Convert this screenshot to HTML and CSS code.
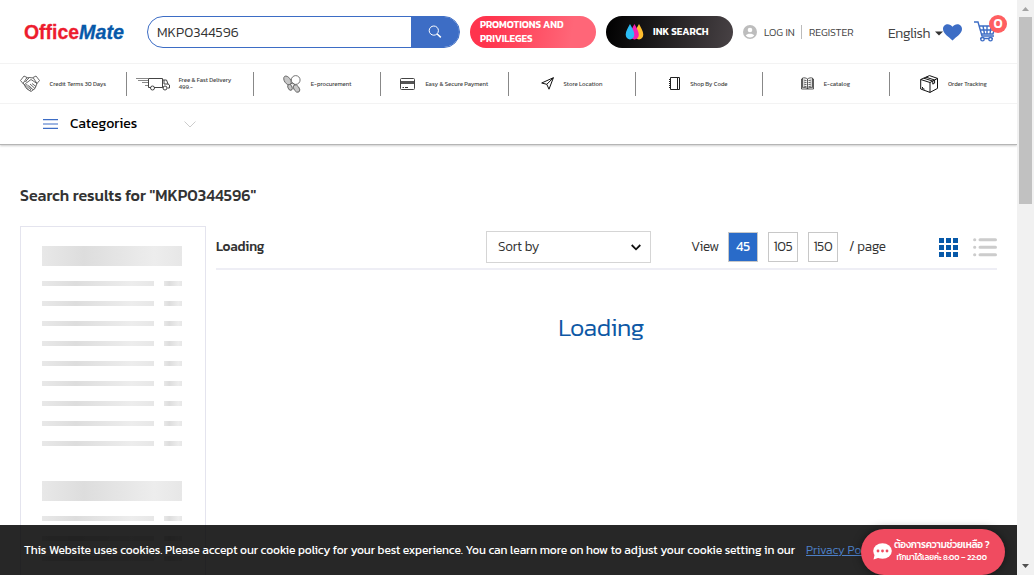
FILE: index.html
```html
<!DOCTYPE html>
<html lang="en">
<head>
<meta charset="utf-8">
<title>OfficeMate - Search results</title>
<link rel="stylesheet" href="styles.css">
</head>
<body>
<div class="page">
  <header class="header">
    <div class="topbar">
      <svg class="logo" width="102" height="22" viewBox="0 0 102 22" aria-label="OfficeMate">
        <text class="logo-office" x="0" y="17.500" textLength="55" lengthAdjust="spacingAndGlyphs">Office</text>
        <text class="logo-mate" x="55" y="17.500" textLength="45" lengthAdjust="spacingAndGlyphs">Mate</text>
      </svg>
      <div class="search">
        <div class="search-input">MKP0344596</div>
        <div class="search-btn"><svg width="14" height="14" viewBox="0 0 14 14" fill="none" stroke="#fff"><circle cx="5.8" cy="5.6" r="4.6"/><path d="M9.2 9l3.6 3.4" stroke-width="1.5"/></svg></div>
      </div>
      <div class="pill promo">PROMOTIONS AND<br>PRIVILEGES</div>
      <div class="pill ink">
        <svg width="20" height="18" viewBox="0 0 20 18"><path d="M14 1c2 4 4.300 7 4.300 10.500a4.300 5 0 0 1-8.600 0C9.700 8 12 5 14 1z" fill="#ffbd2e"/><path d="M9.500 1c2 4 4.300 7 4.300 10.500a4.300 5 0 0 1-8.600 0C5.200 8 7.500 5 9.500 1z" fill="#f51fb0"/><path d="M5 1c2 4 4.300 7 4.300 10.500a4.300 5 0 0 1-8.600 0C.7 8 3 5 5 1z" fill="#2bbcf5"/></svg>
        <span>INK SEARCH</span>
      </div>
      <div class="account">
        <svg width="14" height="14" viewBox="0 0 14 14"><circle cx="7" cy="7" r="7" fill="#bdbdbd"/><circle cx="7" cy="5" r="2.300" fill="#fff"/><path d="M2.800 10.500c1-2.500 7.400-2.500 8.400 0-2 2.600-6.400 2.600-8.400 0z" fill="#fff"/></svg>
        <span class="login">LOG IN</span><span class="register">REGISTER</span>
      </div>
      <div class="lang">English</div>
      <svg class="caret" width="8" height="5" viewBox="0 0 8 5"><path d="M0 .5h8L4 4.500z" fill="#333"/></svg>
      <svg class="heart" width="19" height="17" viewBox="0 0 19 17"><path d="M9.500 16.500C6 13 0 9.500 0 5 0-.2 6.500-1.500 9.500 2.800 12.500-1.500 19-.2 19 5c0 4.500-6 8-9.500 11.500z" fill="#3d6dc5"/></svg>
      <div class="cart">
        <svg width="22" height="21" viewBox="0 0 22 21" fill="none" stroke="#3d6dc5" stroke-width="1.400"><path d="M0 1h4l4 14h12M5 5h16l-2 8H7.500M6 9h14M9 5l1.500 8M13 5v8M17 5l-1 8M6 17.500h13"/><circle cx="8.500" cy="18.200" r="1.700" fill="#fff"/><circle cx="16.500" cy="18.200" r="1.700" fill="#fff"/></svg>
        <span class="badge">0</span>
      </div>
    </div>
    <nav class="services">
      <div class="service"><svg width="20" height="18" viewBox="0 0 20 18" fill="none" stroke="#444" stroke-width=".8"><path d="M.5 5.500L4 1l3 1.500-4 6zM19.500 5.500L16 1l-3 1.500 4 6zM6.500 3l3-.5 3.500.5M3 8l4 6 4 2.500 4-3 2-5-6-4-4 3-1.500-1L9.500 2.500M4 10l2-1.500 1 1-2.200 2M6 12.500l2-2 1 1-2 2.200M8.500 14.500l1.500-2 1 1-1 2.300M10 9l5 4.500M8.800 10.500l4.500 4.500M12 8.500l4 3"/></svg><span class="w57">Credit Terms 30 Days</span></div>
      <div class="service delivery"><svg width="34" height="14" viewBox="0 0 34 14" fill="none" stroke="#444"><path d="M0 1.500h12M2 3.500h10M6 5.500h6M9 8.500h3" stroke="#888" stroke-width="1.200"/><path d="M12.500 1.500h14v9H18m-3 0h-2.500v-9M26.500 3h4l1.500 4 1.500 1v3h-2M28 3v4h4M26.500 10.500h1"/><circle cx="16.500" cy="11" r="2"/><circle cx="29" cy="11" r="2"/></svg><span class="w57">Free &amp; Fast Delivery<br>499.-</span></div>
      <div class="service"><svg width="18" height="18" viewBox="0 0 18 18" fill="#c7c7c7" stroke="#666" stroke-width=".9"><ellipse cx="4.500" cy="5.500" rx="3" ry="5" transform="rotate(-35 4.500 5.500)"/><circle cx="12.700" cy="5" r="4.400" fill="#fff"/><ellipse cx="7" cy="12.300" rx="2" ry="3" transform="rotate(-25 7 12.300)"/><ellipse cx="13.500" cy="13.500" rx="2.600" ry="4.200" transform="rotate(-35 13.500 13.500)"/><path d="M7 9l3-1 2 2"/></svg><span class="w41">E-procurement</span></div>
      <div class="service"><svg width="15" height="12" viewBox="0 0 15 12"><rect x=".5" y=".5" width="14" height="11" rx="1" fill="#fff" stroke="#444"/><path d="M1 3h13v3H1z" fill="#555"/><path d="M2.500 9.500h1.500m1 0h3" stroke="#333"/></svg><span class="w63">Easy &amp; Secure Payment</span></div>
      <div class="service"><svg width="13" height="13" viewBox="0 0 13 13" fill="none" stroke="#111"><path d="M.7 6L12.400.7 8 12.200 5.800 7.300zM5.800 7.300L12.400.7"/></svg><span class="w39">Store Location</span></div>
      <div class="service"><svg width="11" height="13" viewBox="0 0 11 13" fill="none" stroke="#222"><path d="M1.500.5h9v12h-9zM8.500.5v12"/><path d="M0 2.500h2M0 4.500h2M0 6.500h2M0 8.500h2M0 10.500h2"/></svg><span class="w38">Shop By Code</span></div>
      <div class="service"><svg width="13" height="13" viewBox="0 0 13 13" fill="none" stroke="#333" stroke-width=".8"><path d="M6.500 2C5 .7 3 .7 1.500 1v9.500c2-.3 3.500 0 5 1 1.500-1 3-1.300 5-1V1c-1.500-.3-3.500-.3-5 1zm0 0v10M1.500 2H.5v10h12V2h-1M2.500 3l3 .6M2.500 5l3 .6M2.500 7l3 .6M2.500 9l3 .6M10.500 3l-3 .6M10.500 5l-3 .6M10.500 7l-3 .6M10.500 9l-3 .6"/></svg><span class="w27">E-catalog</span></div>
      <div class="service"><svg width="18" height="18" viewBox="0 0 18 18" fill="none" stroke="#111" stroke-width="1"><path d="M.7 4.500L9.500.6l8 2.800v10L10 17.400.7 14zM.7 4.500L10 7.500l7.500-4.100M10 7.500v10M3.800 3.200l9 2.900v3l1.800-1V5L6 2.200M2.500 12v1.500l2 .7"/></svg><span class="w39">Order Tracking</span></div>
    </nav>
    <div class="categories">
      <svg width="15" height="10" viewBox="0 0 15 10"><path d="M0 .7h15M0 5h15M0 9.300h15" stroke="#3d6dc5" stroke-width="1.200"/></svg>
      <span class="cat-label">Categories</span>
      <svg width="12" height="7" viewBox="0 0 12 7" fill="none" stroke="#ccc"><path d="M.5.5L6 6 11.500.5"/></svg>
    </div>
  </header>
  <main class="main">
    <h1 class="title">Search results for "MKP0344596"</h1>
    <div class="content">
      <aside class="filters">
        <div class="group"><div class="block"></div>
          <div class="line"><i></i><b></b></div><div class="line"><i></i><b></b></div><div class="line"><i></i><b></b></div>
          <div class="line"><i></i><b></b></div><div class="line"><i></i><b></b></div><div class="line"><i></i><b></b></div>
          <div class="line"><i></i><b></b></div><div class="line"><i></i><b></b></div><div class="line"><i></i><b></b></div>
        </div>
        <div class="group"><div class="block"></div>
          <div class="line"><i></i><b></b></div><div class="line"><i></i><b></b></div><div class="line"><i></i><b></b></div>
        </div>
      </aside>
      <section class="results">
        <div class="toolbar">
          <strong class="status">Loading</strong>
          <div class="sort"><span>Sort by</span><svg width="10" height="7" viewBox="0 0 10 7" fill="none" stroke="#111" stroke-width="1.800"><path d="M.7 1L5 5.300 9.300 1"/></svg></div>
          <span class="view">View</span>
          <div class="sizes"><span class="size active">45</span><span class="size">105</span><span class="size">150</span></div>
          <span class="per-page">/ page</span>
          <svg class="grid-icon" width="19" height="19" viewBox="0 0 19 19" fill="#0759a9"><path d="M0 0h5v5H0zM7 0h5v5H7zM14 0h5v5h-5zM0 7h5v5H0zM7 7h5v5H7zM14 7h5v5h-5zM0 14h5v5H0zM7 14h5v5H7zM14 14h5v5h-5z"/></svg>
          <svg width="24" height="19" viewBox="0 0 24 19" stroke="#ccc" stroke-width="3" stroke-linecap="round"><path d="M1.600 1.800h.2M7 1.800h15.500M1.600 9.300h.2M7 9.300h15.500M1.600 16.800h.2M7 16.800h15.500"/></svg>
        </div>
        <div class="loading">Loading</div>
      </section>
    </div>
  </main>
  <div class="cookie"><span>This Website uses cookies. Please accept our cookie policy for your best experience. You can learn more on how to adjust your cookie setting in our</span><a>Privacy Policy</a></div>
  <div class="chat">
    <svg width="19" height="17" viewBox="0 0 19 17"><ellipse cx="9.500" cy="8" rx="9.300" ry="7.800" fill="#fff"/><path d="M2 10L.5 16.500 8 14z" fill="#fff"/><g fill="#f04b60"><circle cx="5" cy="8" r="1.400"/><circle cx="9.500" cy="8" r="1.400"/><circle cx="14" cy="8" r="1.400"/></g></svg>
    <div class="chat-text"><div class="chat-q">ต้องการความช่วยเหลือ ?</div><div class="chat-h">ทักมาได้เลยค่ะ 8:00 – 22:00</div></div>
  </div>
</div>
<div class="scrollbar">
  <svg width="17" height="17"><path d="M5 11h7L8.500 7z" fill="#a3a3a3"/></svg>
  <div class="thumb"></div>
  <svg width="17" height="17"><path d="M5 6h7L8.500 10z" fill="#505050"/></svg>
</div>
</body>
</html>
```
FILE: styles.css
```css
* { box-sizing: border-box; }
body { margin: 0; width: 1034px; height: 575px; overflow: hidden; display: flex; background: #fff; color: #333; font-family: Kanit, Roboto, "Noto Sans", sans-serif; font-weight: 300; }
svg { display: block; flex: none; }
.page { position: relative; width: 1017px; height: 575px; overflow: hidden; }
.header { height: 145px; border-bottom: 1px solid #b5b5b5; box-shadow: 0 1px 2px rgba(0,0,0,.2); }
.topbar { height: 64px; border-bottom: 1px solid #f3f3f3; display: flex; align-items: center; padding-left: 24px; white-space: nowrap; }
.logo { margin-right: 21px; }
.logo-office, .logo-mate { font: bold 20px "Liberation Sans", sans-serif; fill: #ed1c2e; stroke: #ed1c2e; stroke-width: .3; }
.logo-mate { font-style: italic; fill: #0759a9; stroke: #0759a9; }
.search { width: 313px; height: 32px; display: flex; border-radius: 16px; overflow: hidden; border: 1px solid #3d6dc5; }
.search-input { flex: 1; padding-left: 9px; line-height: 31px; font-size: 14px; }
.search-btn { width: 48px; background: #3d6dc5; display: flex; align-items: center; justify-content: center; }
.pill { height: 32px; border-radius: 16px; color: #fff; font-weight: 600; }
.promo { width: 126px; margin-left: 10px; padding: 2px 0 0 10px; background: linear-gradient(100deg, #ff344d 15%, #ff6678 80%); font-size: 10px; line-height: 14px; letter-spacing: -.05px; }
.ink { width: 127px; margin-left: 10px; padding-left: 19px; display: flex; align-items: center; gap: 8px; background: linear-gradient(100deg, #000, #484245); font-size: 10px; }
.account { margin-left: 10px; width: 120px; display: flex; align-items: center; font-size: 10.500px; color: #444; }
.login { width: 38px; margin-left: 7px; border-right: 1px solid #bbb; line-height: 14px; }
.register { margin-left: 7px; }
.lang { margin-left: 25px; width: 47px; padding-top: 3px; font-size: 14px; letter-spacing: -.4px; color: #444; }
.caret { margin-top: 4px; }
.heart { margin-top: 2px; }
.cart { position: relative; margin-left: 12px; }
.badge { position: absolute; left: 15px; top: -6px; width: 18px; height: 18px; border-radius: 50%; background: #ff5f61; color: #fff; text-align: center; font-weight: 500; font-size: 14px; line-height: 18px; }
.services { height: 40px; display: flex; align-items: center; border-bottom: 1px solid #f3f3f3; }
.service { width: 127.200px; height: 24px; display: flex; align-items: center; justify-content: center; gap: 10px; border-right: 1px solid #888; font-size: 6px; line-height: 6px; font-weight: 400; color: #444; white-space: nowrap; }
.service:last-child { border: 0; }
.delivery { gap: 9px; padding-right: 9px; }
.delivery span { line-height: 7px; padding-bottom: 1px; }
.w57 { width: 57px; } .w41 { width: 41px; } .w63 { width: 63px; } .w39 { width: 39px; } .w38 { width: 38px; } .w27 { width: 27px; }
.categories { height: 40px; display: flex; align-items: center; padding-left: 43px; }
.cat-label { width: 114px; margin-left: 12px; font-size: 14px; font-weight: 400; color: #000; padding-bottom: 2px; }
.main { padding: 40px 20px 0; }
.title { margin: 0 0 21px; font-size: 16px; line-height: 20px; font-weight: 500; }
.content { display: flex; gap: 10px; }
.filters { width: 186px; height: 400px; border: 1px solid #e4e4ee; padding: 19px 23px 19px 21px; }
.group { margin-bottom: 35px; }
.block, .line i, .line b { background: linear-gradient(90deg, #e8e8e8, #ddd 30%, #ededed 80%, #e7e7e7); }
.block { height: 20px; }
.line { height: 5px; margin-top: 15px; display: flex; justify-content: space-between; }
.line i { width: 112px; }
.line b { width: 18px; }
.results { width: 781px; }
.toolbar { height: 44px; border-bottom: 2px solid #eeeef5; display: flex; align-items: center; font-size: 13.500px; letter-spacing: -.2px; }
.status { width: 270px; font-weight: 500; padding-bottom: 2px; }
.sort { width: 165px; height: 32px; border: 1px solid #d5d5d5; display: flex; align-items: center; justify-content: space-between; padding: 0 9px 0 11px; }
.sort span, .view, .per-page { padding-bottom: 2px; }
.view { margin-left: 40px; width: 37px; }
.sizes { display: flex; gap: 10px; }
.size { width: 30px; height: 30px; border: 1px solid #c8c8c8; text-align: center; line-height: 27px; }
.active { background: #296bc9; color: #fff; font-weight: 400; }
.per-page { margin-left: 11px; width: 90px; }
.grid-icon { margin-right: 15px; }
.loading { width: 770px; margin-top: 42px; text-align: center; font-size: 25px; letter-spacing: -.5px; line-height: 30px; color: #0d58a5; }
.cookie { position: absolute; left: 0; right: 0; bottom: 0; height: 50px; background: rgba(0,0,0,.847); padding-left: 24px; display: flex; align-items: center; gap: 10px; color: #fff; font-size: 12px; white-space: nowrap; }
.cookie span { width: 772px; font-weight: 400; letter-spacing: -.1px; }
.cookie a { color: #4d80c8; text-decoration: underline; }
.chat { position: absolute; right: 12px; bottom: 0; width: 144px; height: 46px; border-radius: 23px; background: #f04b60; box-shadow: 0 0 10px rgba(0,0,0,.45); color: #fff; display: flex; align-items: center; padding: 0 0 2px 12px; gap: 2px; font-weight: 500; text-align: center; white-space: nowrap; }
.chat-q { font-size: 10px; line-height: 12px; letter-spacing: -.25px; }
.chat-h { font-size: 8px; line-height: 12px; letter-spacing: -.1px; }
.scrollbar { width: 17px; height: 575px; background: #f1f1f1; display: flex; flex-direction: column; align-items: center; }
.thumb { width: 13px; height: 187px; background: #c1c1c1; margin-bottom: auto; }
```
